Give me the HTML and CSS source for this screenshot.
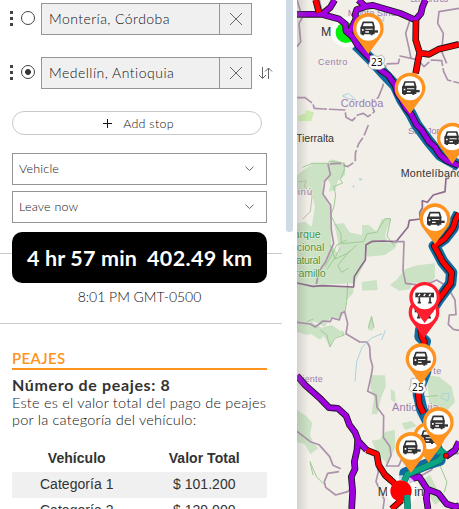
FILE: index.html
```html
<!DOCTYPE html>
<html lang="es">
<head>
<meta charset="utf-8">
<title>Ruta</title>
<link rel="stylesheet" href="styles.css">
</head>
<body>
<main class="app">
<section class="panel">
  <div class="stops">
    <div class="stop"><i class="dots"></i><i class="radio"></i><div class="field"><span class="place first">Montería, Córdoba</span><button aria-label="Quitar"><svg width="12" height="12" viewBox="0 0 12 12"><path d="M0 0L12 12M12 0L0 12"/></svg></button></div></div>
    <div class="stop"><i class="dots"></i><i class="radio selected"></i><div class="field"><span class="place second">Medellín, Antioquia</span><button aria-label="Quitar"><svg width="12" height="12" viewBox="0 0 12 12"><path d="M0 0L12 12M12 0L0 12"/></svg></button></div><svg class="swap" width="16" height="13" viewBox="0 0 16 13"><path d="M4.5 0V11M1 8L4.5 11.5L8 8M10.5 12V1M7 4.5L10.5 1L14 4.5"/></svg></div>
  </div>
  <button class="add"><svg width="9" height="9" viewBox="0 0 9 9"><path d="M0 4.5H9M4.5 0V9"/></svg><span>Add stop</span></button>
  <div class="select"><span class="vehicle">Vehicle</span><svg width="9" height="6" viewBox="0 0 9 6"><path d="M.5 .7L4.5 4.5L8.5 .7"/></svg></div>
  <div class="select"><span class="leave">Leave now</span><svg width="9" height="6" viewBox="0 0 9 6"><path d="M.5 .7L4.5 4.5L8.5 .7"/></svg></div>
  <div class="summary"><div class="total"><span class="time">4 hr 57 min</span><span class="distance">402.49 km</span></div></div>
  <div class="arrival"><span>8:01 PM GMT-0500</span></div>
  <div class="tolls">
    <h2><span>PEAJES</span></h2>
    <h3><span>Número de peajes: 8</span></h3>
    <p><span class="line1">Este es el valor total del pago de peajes</span><br><span class="line2">por la categoría del vehículo:</span></p>
    <table>
      <thead><tr><th>Vehículo</th><th>Valor Total</th></tr></thead>
      <tbody><tr><td>Categoría 1</td><td>$ 101.200</td></tr><tr><td>Categoría 2</td><td>$ 129.000</td></tr></tbody>
    </table>
  </div>
</section>
<div class="scroll"><i></i></div>
<svg class="map" viewBox="6 0 486 1527">
  <defs>
    <linearGradient id="edge"><stop offset="0" stop-color="#777" stop-opacity=".25"/><stop offset="1" stop-color="#777" stop-opacity="0"/></linearGradient>
    <g id="car"><path d="M-15 -19H13L17 -5H-20Z" fill="#fff" stroke="#333" stroke-width="5" stroke-linejoin="round"/><path d="M-24 -6H19V17H13V20H7V17H-13V20H-20V17H-24Z" fill="#333"/><path d="M-19 1H-14V6H-19ZM-9 8H2V12H-9ZM-9 0H13V3H-9Z" fill="#fff"/><path d="M3 5H29V12H3Z" fill="#333"/></g>
    <g id="toll"><path d="M0 76L-38 25A46 46 0 1 1 38 25Z" fill="#ff9320"/><circle r="36" fill="#fff"/><use href="#car"/></g>
    <g id="closed"><path d="M0 77L-38 26A46 46 0 1 1 38 26Z" fill="#ff1e2d"/><circle r="36" fill="#fff"/><path d="M-28 -14H28V0H-28Z" fill="#333"/><path d="M-19 -4L-14 -10M-3 -4L2 -10M13 -4L18 -10" stroke="#fff" stroke-width="4"/><path d="M-16 0V17M16 0V17M-21 16H-11M11 16H21" stroke="#333" stroke-width="5"/></g>
  </defs>
  <rect x="6" width="486" height="1527" fill="#f2efe9"/>
  <g class="forest">
    <path d="M10 348L30 340L34 330L58 337L48 364L10 363Z" class="park-light"/>
    <path d="M6 525L40 500L55 490H105L110 478L148 488L151 524L128 542L122 570L102 575L107 552L96 535L82 550L85 590L105 618L109 735L132 765L128 700L116 672L144 670L166 700L190 706L186 725L212 733L207 793L178 850L60 855L6 849V670L30 665L50 680L60 620L45 560L6 580Z"/>
    <path d="M120 680L147 670L160 697L201 705V675H222L245 695L260 658L287 655L270 706L278 730L309 721L300 744L270 765L218 770L212 760L162 797L140 780Z"/>
    <path d="M6 850L48 858H176L174 880L155 900L148 940L130 960L106 955L89 980L60 965L6 966Z"/>
    <path d="M6 965L50 966L80 983L110 975L132 990L147 1003L116 1014L105 1041L86 1008L75 1019L48 1002L36 1005L6 996Z"/>
    <path d="M200 846L245 840L248 870L202 872ZM284 855L304 840L330 808L366 796L420 790V835L395 856L352 847L345 868L313 872ZM348 878L375 870L380 900L350 910ZM220 974L228 946L237 975L233 992L220 990Z"/>
    <path d="M225 1126H270L273 1158L258 1195L247 1242L230 1243L237 1193L227 1168ZM6 1230L33 1247L52 1268L45 1304L55 1330L70 1344L46 1363L29 1332L6 1326ZM395 1125L432 1130L470 1160L480 1205L445 1245L405 1240L400 1180ZM320 1270L350 1263L365 1279L330 1290ZM230 1322L255 1318L271 1295L300 1290V1345L277 1391L248 1362Z"/>
    <path d="M287 1167L300 1176L302 1208L288 1201ZM382 1440L405 1425L423 1460L440 1499L420 1515L400 1486Z"/>
  </g>
  <g class="relief"><path d="M23 502L51 490H100L104 483L148 490V510L136 539L143 549L116 560L122 583L117 620L107 646L120 670L138 702L139 731L206 725L216 701L245 697L270 656H287L276 708L299 739M106 735L120 777L160 759L184 735M161 804L140 817L128 797L165 751M158 850L155 905L150 935M36 965L55 957M76 990L95 1004L105 1041L119 1015L148 1005L140 992M220 985L230 950L237 984M92 1457L65 1431L45 1385L54 1425M389 1190L429 1187M431 1388L456 1446L448 1477M90 800L110 765L125 735L155 720M96 808L122 770L135 745"/><path d="M7 546L33 542L28 558L51 590L46 635L22 658" class="contour"/></g>
  <g class="border">
    <path d="M220 375L206 410L191 431L181 460V484L158 500L133 490L99 492" stroke-dasharray="34 8"/><path d="M99 492L106 524L89 544L84 583L107 616L109 690L116 730L91 787L72 814L64 852"/>
    <path class="strong" d="M492 483L460 535H453L450 575L415 585L397 607L382 602V624L374 637L376 657L343 661L339 681L303 725L262 723L232 724L213 734L211 780L195 803L178 830L176 861L83 857L54 859L6 849"/>
    <path d="M294 725H327L324 812L332 850L387 857L425 840L457 860L480 900L483 944L463 945L460 973L475 988L492 991"/>
    <path d="M6 967L46 972L61 981L84 963L106 965L111 954L133 960L139 939L149 935L158 971L153 1001L194 1026H216L224 1041L226 1075L233 1100L229 1125L218 1174L243 1186L246 1222L266 1248L265 1312L285 1340L288 1367L274 1398H311L321 1375L340 1363L355 1351"/>
    <path d="M6 1294L46 1325L72 1334L104 1370L114 1396L137 1406M132 1415L98 1420L88 1445L92 1462L122 1485L158 1475L175 1455M240 1370L250 1415L243 1445L268 1499L264 1527M373 1430L410 1409L420 1390L450 1365L492 1360"/>
    <path d="M6 293L30 293L53 310L58 325L86 327L150 330L153 352L172 362L188 345L205 340L219 350L238 335L228 310L250 292L263 260L269 235L272 192L310 190L315 168L370 180L387 200L410 180L440 182L446 215L458 240L492 249" stroke-dasharray="50 6"/>
    <path d="M6 140L17 125L12 71L22 52L6 0M73 0L80 30L114 20M345 60L332 100L342 145L348 175M492 25L432 35L428 70L445 100L440 155L455 190"/>
  </g>
  <path d="M142 288L160 280L183 300L160 296ZM174 558H177V561H174ZM194 536H199V540H194ZM442 1181L463 1180L458 1203L437 1192ZM250 50L268 46L265 65ZM180 1145L185 1085L201 1042L230 1014L261 1001M260 1020L271 991" class="water"/>
  <g class="labels">
    <text x="158" y="48" textLength="145" class="area">Monte Sinú</text><text x="346" y="5" textLength="114" class="area">San Fernando</text>
    <text x="69" y="195" textLength="88" class="area small">Centro</text><text x="137" y="322" textLength="128" class="area large">Córdoba</text>
    <text x="3" y="426" textLength="114" class="town">Tierralta</text><text x="339" y="403" textLength="125" class="area">San Jorge</text><text x="-13" y="586" textLength="64" class="area">Sinú</text>
    <text x="317" y="532" textLength="185" class="town">Montelíbano</text>
    <text x="-25" y="713" textLength="102" class="park">Parque</text><text x="-35" y="752" textLength="123" class="park">Nacional</text><text x="-19" y="792" textLength="95" class="park">Natural</text><text x="-38" y="832" textLength="130" class="park">Paramillo</text>
    <text x="-27" y="1147" textLength="110" class="area small">Poniente</text><text x="415" y="1121" textLength="24" class="area small">te</text><text x="291" y="1234" textLength="140" class="area large">Antioquia</text>
    <text x="78" y="108" class="city">M</text><text x="248" y="1489" class="city">M</text>
  </g>
  <circle cx="154" cy="96" r="46" fill="#fff" opacity=".75"/><circle cx="153" cy="98" r="31" fill="#00ef0b"/>
  <g class="blue">
    <path d="M183 135L205 156L235 186L262 216L301 257L320 298L348 342L365 375L402 425L435 465L492 497"/>
    <path d="M492 640L482 659L474 684L449 716L418 738L430 760L443 785L470 818L467 850L430 900L391 960L377 990L375 1010L391 1024L382 1054L392 1115L373 1163L370 1183L381 1230L401 1270L430 1360L435 1380L395 1393L330 1420L328 1440"/>
  </g>
  <g class="outline roads">
    <path d="M6 43L80 43L132 57L151 72L153 93L172 110L190 139L222 172L259 212L280 226L301 257L307 280L320 298L331 322L348 342L365 375L379 389L402 425L420 441L435 465L455 482L492 497"/>
    <path d="M81 43L106 22L119 0M190 0L212 20L185 29L180 45L184 54L163 99M212 19L234 16L316 40L361 60L378 40L382 22L391 0"/>
    <path d="M6 1127L30 1155L78 1198L102 1223L128 1225L153 1247L163 1274L180 1297L191 1325L215 1350M188 1321L186 1350L178 1385L180 1407L169 1430L173 1475L170 1527M340 1440L372 1430L397 1468L394 1495L399 1527M398 1468L430 1480L455 1512L480 1520L492 1517M452 1370L480 1350L492 1325"/>
  </g>
  <g class="purple roads">
    <path d="M6 43L80 43L132 57L151 72L153 93L172 110L190 139L222 172L259 212L280 226L301 257L307 280L320 298L331 322L348 342L365 375L379 389L402 425L420 441L435 465L455 482L492 497M81 43L106 22L119 0M190 0L212 20L185 29L180 45L184 54L163 99M212 19L234 16L316 40L361 60L378 40L382 22L391 0"/>
    <path d="M6 1127L30 1155L78 1198L102 1223L128 1225L153 1247L163 1274L180 1297L191 1325L215 1350M188 1321L186 1350L178 1385L180 1407L169 1430L173 1475L170 1527M340 1440L372 1430L397 1468L394 1495L399 1527M398 1468L430 1480L455 1512L480 1520L492 1517M452 1370L480 1350L492 1325"/>
  </g>
  <path class="outline roads" d="M62 0L72 38M363 62L362 120L374 158L368 187L362 220M374 159L402 163L430 148L492 133M215 1350L245 1362L251 1395L270 1425L294 1446L308 1460M492 640L482 659L474 684L449 716L418 738L430 760L443 785L470 818L467 850L430 900L391 960L377 990L380 1010L388 1024L384 1054L378 1115L368 1163L373 1213L386 1240"/>
  <path class="red roads" d="M62 0L72 38M363 62L362 120L374 158L368 187L362 220M374 159L402 163L430 148L492 133M215 1350L245 1362L251 1395L270 1425L294 1446L308 1460M492 640L482 659L474 684L449 716L418 738L430 760L443 785L470 818L467 850L430 900L391 960L377 990L380 1010L388 1024L384 1054L378 1115L368 1163L373 1213L386 1240"/>
  <circle cx="321" cy="1472" r="46" fill="#fff" opacity=".75"/>
  <path class="outline roads" d="M270 1425L294 1446L308 1460M320 1500L290 1527"/><path class="red roads" d="M270 1425L294 1446L308 1460M320 1500L290 1527"/>
  <circle cx="318" cy="1473" r="32" fill="red"/>
  <path class="green-outline" d="M328 1443L337 1423L382 1404L432 1382L449 1362L434 1349L425 1360M336 1485L338 1527"/><path class="green" d="M328 1443L337 1423L382 1404L432 1382L449 1362L434 1349L425 1360M336 1485L338 1527"/>
  <circle cx="453" cy="1367" r="8" fill="red" stroke="#111" stroke-width="2"/>
  <text x="358" y="1489" class="city">in</text>
  <g class="shield"><path d="M225 168L238 165L248 170L260 165L269 175L266 190L271 202L255 209L230 207L219 198L225 184Z"/><text x="228" y="199" textLength="35">23</text><path d="M348 1137L361 1134L370 1138L386 1134L392 1145L389 1157L395 1169L382 1181L354 1178L342 1169L348 1154Z"/><text x="351" y="1173" textLength="35">25</text></g>
  <use href="#toll" x="220" y="86"/><use href="#toll" x="345" y="265"/><use href="#toll" x="472" y="415"/><use href="#toll" x="420" y="657"/>
  <use href="#closed" x="387" y="937"/><use href="#closed" x="389" y="892"/><use href="#toll" x="378" y="1077"/>
  <use href="#toll" x="401" y="1312"/><use href="#toll" x="430" y="1268"/><use href="#toll" x="348" y="1343"/>
  <rect x="6" width="35" height="1527" fill="url(#edge)"/>
</svg>
</main>
</body>
</html>
```
FILE: styles.css
```css
* { box-sizing: border-box; }
body { margin: 0; overflow: hidden; font-family: Lato, sans-serif; font-weight: 300; color: #111; background: #fff; }
button { font: inherit; color: inherit; }
svg { fill: none; stroke: #666; }
.app { display: flex; height: 509px; overflow: hidden; }
.panel { width: 282px; flex: none; height: 509px; overflow: hidden; padding-top: 3px; }
.stops { display: flex; flex-direction: column; gap: 22px; }
.stop { display: flex; height: 32px; padding-left: 10px; align-items: center; }
.dots { width: 3px; height: 15px; margin-right: 8px; margin-top: -2px; background: repeating-linear-gradient(#444 0 3px, transparent 3px 6px); }
.radio { width: 14px; height: 14px; margin-top: -2px; margin-right: 6px; border: 1px solid #444; border-radius: 50%; }
.selected { background: radial-gradient(#333 0 2.5px, transparent 3.3px); }
.field { display: flex; width: 211px; height: 32px; border: 1px solid #959595; background: #f0f0f0; }
.place { flex: 1; padding-left: 7px; line-height: 30px; font-size: 14px; white-space: nowrap; }
.first { letter-spacing: .44px; }
.second { letter-spacing: .49px; }
.field button { width: 32px; padding: 0; border: 0; border-left: 1px solid #959595; background: none; display: grid; place-items: center; }
.swap { margin-left: 6px; }
.add { display: flex; align-items: center; justify-content: center; gap: 11px; width: 250px; height: 24px; margin: 22px 0 0 12px; padding: 0 0 0 3px; border: 1px solid #c8c8c8; border-radius: 12px; background: #fff; font-size: 12.5px; letter-spacing: .25px; }
.add svg { stroke: #111; }
.select { display: flex; align-items: center; justify-content: space-between; width: 255px; height: 32px; margin: 6px 0 0 12px; padding: 0 12px 1px 6px; border: 1px solid #959595; font-size: 12.5px; letter-spacing: .2px; }
.add + .select { margin-top: 18px; }
.summary { margin-top: 9px; padding-left: 12px; background: linear-gradient(#ccc, #ccc) 0 21px / 100% 1px no-repeat; }
.total { display: flex; align-items: center; gap: 10px; width: 255px; height: 51px; padding-left: 15px; border-radius: 10px; background: #000; color: #fff; font-size: 21.5px; font-weight: 700; white-space: nowrap; letter-spacing: .15px; }
.distance { letter-spacing: .35px; }
.arrival { width: 282px; height: 41px; padding: 5px 3px 0 0; border-bottom: 1px solid #ccc; text-align: center; font-size: 14px; line-height: 17px; letter-spacing: -.03px; }
.tolls { width: 255px; margin: 27px 0 0 12px; }
h2 { margin: 0; height: 19px; border-bottom: 2px solid #ff9320; color: #ff9320; font-size: 15px; line-height: 15px; font-weight: 600; letter-spacing: .4px; }
h3 { margin: 7px 0 0; font-size: 16px; line-height: 16px; color: #333; white-space: nowrap; letter-spacing: .65px; }
p { margin: 1px 0 1px; font-size: 14.5px; line-height: 17px; white-space: nowrap; letter-spacing: .22px; }
table { width: 255px; margin-top: 17px; border-collapse: collapse; table-layout: fixed; font-family: "Liberation Sans", sans-serif; font-size: 14px; font-weight: 400; letter-spacing: .04px; text-align: center; color: #333; }
p + table { margin-top: 18px; }
th, td { height: 26px; padding: 0 0 2px 2px; }
tbody tr:first-child { background: #f0f0f0; }
.scroll { width: 15px; flex: none; padding-left: 4px; }
.scroll i { display: block; width: 7px; height: 232px; border-radius: 0 0 3px 3px; background: #cfdbe4; }
.map { width: 162px; height: 509px; flex: none; stroke: none; font-weight: 400; }
.forest { fill: #cce2c4; }
.park-light { fill: #cdebb0; }
.relief { stroke: #9dcb94; stroke-width: 3; }
.contour { stroke: #bfbfa4; }
.border { stroke: #ab91aa; stroke-width: 5; stroke-linejoin: round; }
.strong { stroke: #8d6b8d; }
.water { stroke: #aad3df; stroke-width: 3; }
.labels { font-family: "Liberation Sans", sans-serif; font-size: 32px; stroke: #f2efe9; stroke-width: 3; paint-order: stroke; }
.area { fill: #9b7eac; font-size: 29px; }
.small { font-size: 27px; }
.large { font-size: 33px; }
.town { fill: #333; }
.park { fill: #3b963b; font-size: 32px; }
.city { fill: #333; font-family: "Liberation Sans", sans-serif; font-size: 37px; }
.blue { stroke: #116ba0; stroke-width: 34; stroke-linejoin: round; }
.roads { stroke-linejoin: round; }
.outline { stroke: #141414; stroke-width: 20; }
.purple { stroke: #a000e0; stroke-width: 15; }
.red { stroke: #f00; stroke-width: 15; }
.green-outline { stroke: #126b63; stroke-width: 20; stroke-linejoin: round; }
.green { stroke: #0aa681; stroke-width: 16; stroke-linejoin: round; }
.shield path { fill: #fff; stroke: #999; stroke-width: 2; }
.shield text { fill: #111; font-family: "Noto Sans", sans-serif; font-size: 30px; }
```
